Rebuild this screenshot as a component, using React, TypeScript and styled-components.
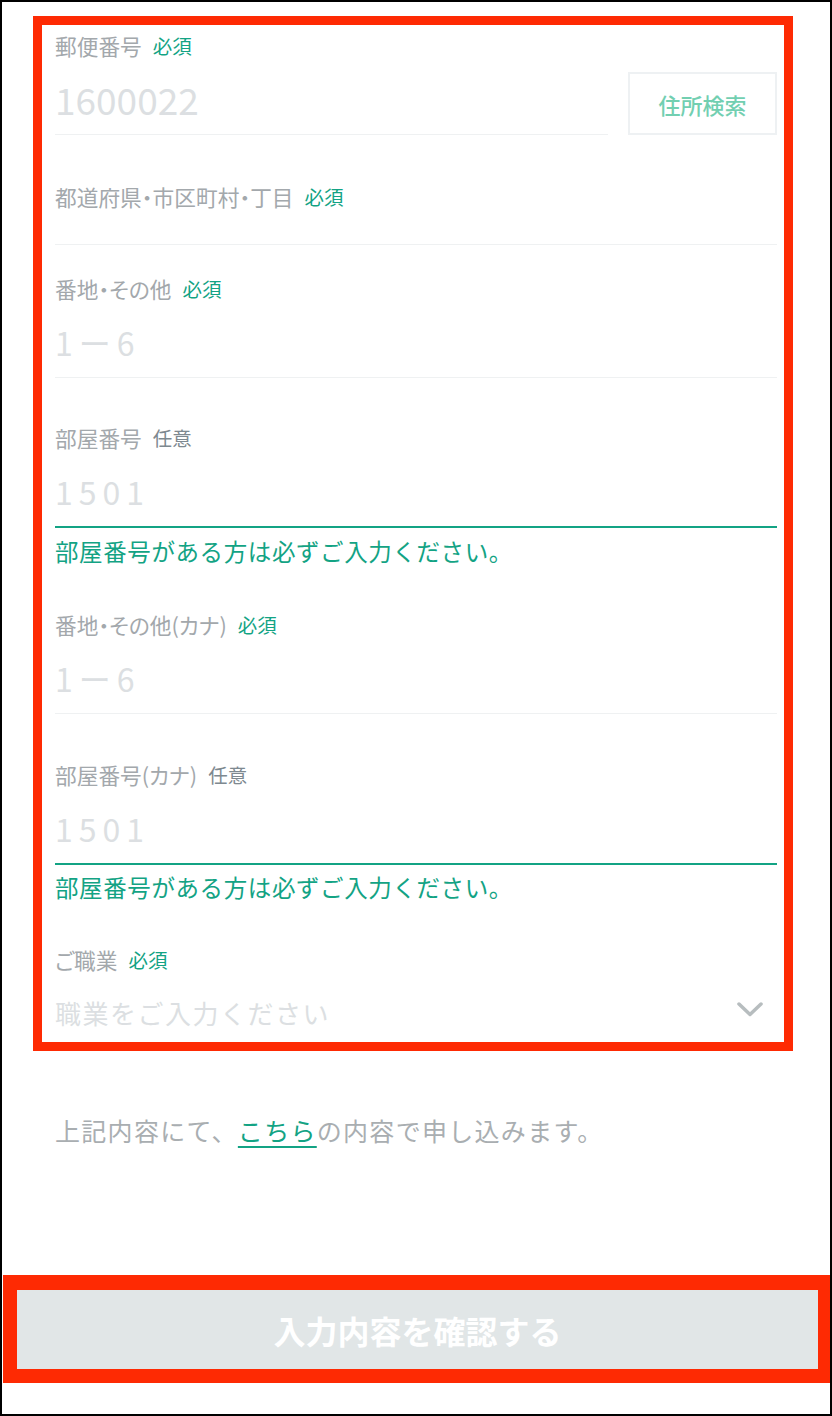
import React from "react";
import styled, { createGlobalStyle } from "styled-components";

const GREEN = "#13a384";
const RED = "#fe2a03";
const JP = `"Noto Sans CJK JP", "Noto Sans", sans-serif`;

const GlobalStyle = createGlobalStyle`
  html, body { margin: 0; padding: 0; background: #fff; }
  body { font-family: ${JP}; }
  *, *::before, *::after { box-sizing: border-box; }
`;

const Frame = styled.div`
  width: 832px;
  height: 1416px;
  border: 2px solid #000;
  background: #fff;
  display: flex;
  flex-direction: column;
`;

const Card = styled.section`
  margin: 14px 0 0 31px;
  width: 760px;
  border: 9px solid ${RED};
  padding: 6px 7px 0 13px;
  display: flex;
  flex-direction: column;
  background: #fff;
`;

const Field = styled.div<{ $top: number }>`
  display: flex;
  flex-direction: column;
  margin-top: ${(p) => p.$top}px;
`;

const LabelRow = styled.div`
  display: flex;
  align-items: center;
  height: 28px;
  font-size: 21.7px;
  font-feature-settings: "palt";
  color: #a3a8ac;
  white-space: nowrap;
`;

const Badge = styled.span<{ $required: boolean }>`
  margin-left: 11px;
  font-size: 19.5px;
  color: ${(p) => (p.$required ? GREEN : "#7e8990")};
`;

const InputRow = styled.div`
  display: flex;
  align-items: flex-end;
  gap: 20px;
`;

const InputBox = styled.div<{ $focus?: boolean; $compact?: boolean; $noLine?: boolean }>`
  flex: 1;
  display: flex;
  align-items: center;
  padding: ${(p) => (p.$compact ? "0" : p.$noLine ? "19px 0 10px" : "20px 0 15px")};
  border-bottom: ${(p) =>
    p.$noLine ? "none" : p.$focus ? `2px solid ${GREEN}` : "1px solid #eff1f2"};
`;

const TextInput = styled.input<{ $size: number; $spacing?: number; $compact?: boolean }>`
  display: block;
  flex: 1;
  min-width: 0;
  height: ${(p) => (p.$compact ? 34 : 40)}px;
  border: 0;
  padding: 0;
  margin: 0;
  outline: none;
  background: transparent;
  font-family: ${JP};
  font-size: ${(p) => p.$size}px;
  letter-spacing: ${(p) => p.$spacing ?? 0}px;
  color: #333;
  &::placeholder {
    color: #dcdfe2;
    opacity: 1;
  }
`;

const SearchButton = styled.button`
  width: 149px;
  height: 63px;
  border: 2px solid #eef1f3;
  background: #fff;
  color: #72cfb1;
  font-family: ${JP};
  font-size: 22px;
  font-weight: 500;
  padding: 0;
  flex-shrink: 0;
`;

const ErrorText = styled.p<{ $top: number }>`
  margin: ${(p) => p.$top}px 0 0;
  height: 32px;
  line-height: 32px;
  font-size: 23.5px;
  letter-spacing: 0.6px;
  color: ${GREEN};
  white-space: nowrap;
`;

const Chevron = styled.svg`
  flex-shrink: 0;
  margin: 0 14px 5px 0;
`;

const Notice = styled.p`
  margin: 61px 0 0 53px;
  height: 36px;
  line-height: 36px;
  font-size: 25px;
  letter-spacing: 1.3px;
  color: #a9aeb1;
  white-space: nowrap;
`;

const NoticeLink = styled.a`
  color: ${GREEN};
  text-decoration: underline;
  text-decoration-thickness: 2px;
  text-underline-offset: 5px;
`;

const SubmitHighlight = styled.div`
  margin: auto 0 31px 1px;
  width: 827px;
  border-style: solid;
  border-color: ${RED};
  border-width: 15px 12px 14px 14px;
`;

const SubmitButton = styled.button`
  display: flex;
  align-items: center;
  justify-content: center;
  width: 100%;
  height: 79px;
  border: 0;
  padding: 0;
  background: #e1e6e7;
  color: #fff;
  font-family: ${JP};
  font-size: 32px;
  font-weight: 700;
`;

type Req = { label: string; required: boolean };

const Label: React.FC<Req> = ({ label, required }) => (
  <LabelRow>
    {label}
    <Badge $required={required}>{required ? "必須" : "任意"}</Badge>
  </LabelRow>
);

export default function App() {
  return (
    <>
      <GlobalStyle />
      <Frame>
        <Card>
          <Field $top={0}>
            <Label label="郵便番号" required />
            <InputRow>
              <InputBox>
                <TextInput $size={37} placeholder="1600022" readOnly />
              </InputBox>
              <SearchButton type="button">住所検索</SearchButton>
            </InputRow>
          </Field>

          <Field $top={47}>
            <Label label="都道府県・市区町村・丁目" required />
            <InputBox $compact>
              <TextInput $size={24} $compact readOnly />
            </InputBox>
          </Field>

          <Field $top={29}>
            <Label label="番地・その他" required />
            <InputBox>
              <TextInput $size={32} $spacing={6} placeholder="1ー6" readOnly />
            </InputBox>
          </Field>

          <Field $top={45}>
            <Label label="部屋番号" required={false} />
            <InputBox $focus>
              <TextInput $size={32} $spacing={6} placeholder="1501" readOnly />
            </InputBox>
          </Field>
          <ErrorText $top={7}>部屋番号がある方は必ずご入力ください。</ErrorText>

          <Field $top={43}>
            <Label label="番地・その他(カナ)" required />
            <InputBox>
              <TextInput $size={32} $spacing={6} placeholder="1ー6" readOnly />
            </InputBox>
          </Field>

          <Field $top={46}>
            <Label label="部屋番号(カナ)" required={false} />
            <InputBox $focus>
              <TextInput $size={32} $spacing={6} placeholder="1501" readOnly />
            </InputBox>
          </Field>
          <ErrorText $top={6}>部屋番号がある方は必ずご入力ください。</ErrorText>

          <Field $top={42}>
            <Label label="ご職業" required />
            <InputBox $noLine>
              <TextInput $size={26} $spacing={1.5} placeholder="職業をご入力ください" readOnly />
              <Chevron width="26" height="15" viewBox="0 0 26 15" aria-hidden>
                <polyline
                  points="2,2 13,12.5 24,2"
                  fill="none"
                  stroke="#b7bdbf"
                  strokeWidth="3.5"
                  strokeLinecap="round"
                  strokeLinejoin="round"
                />
              </Chevron>
            </InputBox>
          </Field>
        </Card>

        <Notice>
          上記内容にて、<NoticeLink href="#">こちら</NoticeLink>の内容で申し込みます。
        </Notice>

        <SubmitHighlight>
          <SubmitButton type="button">入力内容を確認する</SubmitButton>
        </SubmitHighlight>
      </Frame>
    </>
  );
}
